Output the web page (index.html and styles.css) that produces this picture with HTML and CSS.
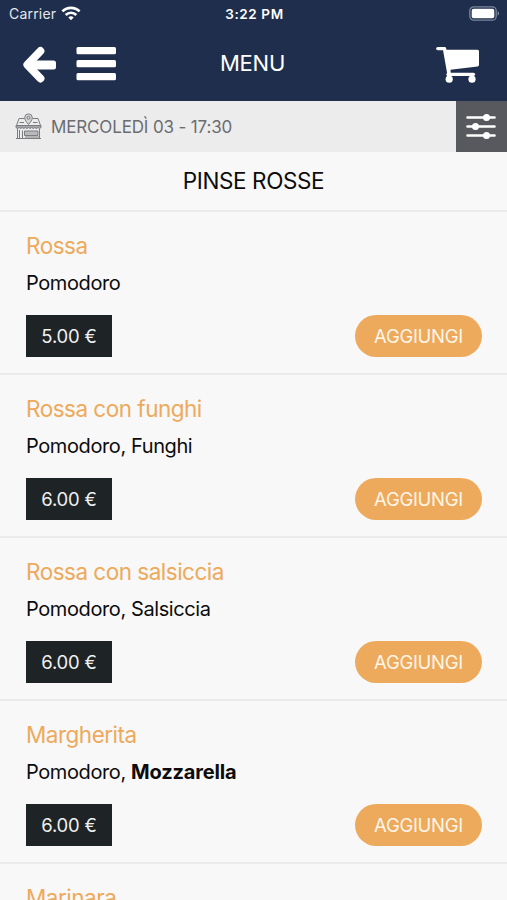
FILE: index.html
```html
<!DOCTYPE html>
<html lang="it">
<head>
    <meta charset="utf-8">
    <meta name="viewport" content="width=device-width, initial-scale=1">
    <title>Menu</title>
    <link rel="stylesheet" href="styles.css">
</head>
<body>
    <header>
        <div class="status-bar">
            <div class="carrier">
                <span>Carrier</span>
                <svg width="20" height="15" viewBox="0 0 20 15" fill="none" stroke="#fff" stroke-width="2.7">
                    <path d="M1.400 5.400C6.300 .6 13.700 .6 18.600 5.400"/>
                    <path d="M4.700 9C7.700 6 12.300 6 15.300 9"/>
                    <path d="M7.300 11.400C8.900 9.900 11.100 9.900 12.700 11.400L10 14.200Z" fill="#fff" stroke="none"/>
                </svg>
            </div>
            <span class="time">3:22 PM</span>
            <svg class="battery" width="31" height="15" viewBox="0 0 31 15">
                <rect x=".8" y=".8" width="26.400" height="13.400" rx="4" fill="none" stroke="#7d869a" stroke-width="1.300"/>
                <rect x="2.700" y="2.700" width="22.600" height="9.600" rx="2" fill="#fff"/>
                <path d="M28.600 5.300C30.600 6 30.600 9 28.600 9.700Z" fill="#7d869a"/>
            </svg>
        </div>
        <nav class="nav-bar">
            <div class="nav-left">
                <svg width="34" height="38" viewBox="0 0 34 38" fill="none" stroke="#fff">
                    <path d="M18.500 6L5.300 19.800L18.500 33.500" stroke-width="7.800" stroke-linejoin="round" stroke-linecap="round"/>
                    <rect x="7" y="15.500" width="27" height="9" rx="2.500" fill="#fff" stroke="none"/>
                </svg>
                <svg width="40" height="34" viewBox="0 0 40 34" fill="#fff">
                    <rect x=".5" width="39.500" height="7.300" rx="1.500"/>
                    <rect x=".5" y="13" width="39.500" height="7.300" rx="1.500"/>
                    <rect x=".5" y="26" width="39.500" height="7.300" rx="1.500"/>
                </svg>
            </div>
            <h1>MENU</h1>
            <svg class="cart" width="44" height="38" viewBox="0 0 44 38" fill="#fff">
                <path d="M1.800 3.600H8.500L12.800 28V33" fill="none" stroke="#fff" stroke-width="3.400" stroke-linecap="round" stroke-linejoin="round"/>
                <path d="M8.500 4.800H41.500Q43 4.800 43 6.300V19.800Q43 21.300 41.500 21.500L14.500 24.800V28H11.500Z"/>
                <path d="M12 29.300H37.500" stroke="#fff" stroke-width="3.200" stroke-linecap="round"/>
                <path d="M36 29V33" stroke="#fff" stroke-width="3"/>
                <circle cx="13.200" cy="34.200" r="3.600"/>
                <circle cx="36" cy="34.200" r="3.600"/>
            </svg>
        </nav>
    </header>

    <div class="info-bar">
        <div class="pickup">
            <svg width="27" height="27" viewBox="0 0 27 27" fill="none" stroke="#7b7c80" stroke-width="1">
                <path d="M9.500 5.500H4L1.500 12.500H25.500L23 5.500H17.500"/>
                <path d="M1 12.500V14.500Q2.600 16.500 4.100 14.500Q5.700 16.500 7.200 14.500Q8.800 16.500 10.300 14.500Q11.900 16.500 13.500 14.500Q15.100 16.500 16.700 14.500Q18.200 16.500 19.800 14.500Q21.300 16.500 22.900 14.500Q24.400 16.500 26 14.500V12.500Z" fill="#a5a6a9"/>
                <path d="M2.500 16V25.500H24.500V16M1 25.500H26M7.500 25V17.500M4.500 17V25M10 24H24M4.500 9.500H9M18 9.500H22.500"/>
                <path d="M9.500 18H23V22.500H9.500Z" fill="#b9babc"/>
                <path d="M13.500 11.500C11.500 9 9.700 7 9.700 4.700A3.800 3.800 0 0 1 17.300 4.700C17.300 7 15.500 9 13.500 11.500Z" fill="#d6d7d8"/>
                <circle cx="13.500" cy="4.800" r="1.500"/>
            </svg>
            <span>MERCOLEDÌ 03 - 17:30</span>
        </div>
        <button class="filter" aria-label="Filtri">
            <svg width="30" height="25" viewBox="0 0 30 25" fill="#fff">
                <path d="M1.500 3.500H28.500M1.500 12.500H28.500M1.500 21.500H28.500" stroke="#fff" stroke-width="2.600" stroke-linecap="round"/>
                <circle cx="20.500" cy="3.500" r="3.500"/>
                <circle cx="9.500" cy="12.500" r="3.500"/>
                <circle cx="20.500" cy="21.500" r="3.500"/>
            </svg>
        </button>
    </div>

    <main>
        <h2>PINSE ROSSE</h2>
        <div class="item">
            <h3>Rossa</h3>
            <p>Pomodoro</p>
            <div class="row">
                <span class="price">5.00 €</span>
                <button class="add">AGGIUNGI</button>
            </div>
        </div>
        <div class="item">
            <h3>Rossa con funghi</h3>
            <p>Pomodoro, Funghi</p>
            <div class="row">
                <span class="price">6.00 €</span>
                <button class="add">AGGIUNGI</button>
            </div>
        </div>
        <div class="item">
            <h3>Rossa con salsiccia</h3>
            <p>Pomodoro, Salsiccia</p>
            <div class="row">
                <span class="price">6.00 €</span>
                <button class="add">AGGIUNGI</button>
            </div>
        </div>
        <div class="item">
            <h3>Margherita</h3>
            <p>Pomodoro, <b>Mozzarella</b></p>
            <div class="row">
                <span class="price">6.00 €</span>
                <button class="add">AGGIUNGI</button>
            </div>
        </div>
        <div class="item">
            <h3>Marinara</h3>
        </div>
    </main>
</body>
</html>
```
FILE: styles.css
```css
* {
    box-sizing: border-box;
}

body {
    margin: 0;
    height: 100vh;
    overflow: hidden;
    background-color: #f8f8f8;
    color: #0c0c0c;
    font-family: Inter, "Liberation Sans", sans-serif;
}

h1, h2, h3, p {
    margin: 0;
    font-weight: 400;
}

svg {
    display: block;
}

button {
    border: none;
    padding: 0;
    font-family: inherit;
    cursor: pointer;
}

header {
    height: 101px;
    background-color: #1f2e4c;
    color: #fff;
}

.status-bar {
    display: grid;
    grid-template-columns: 1fr auto 1fr;
    align-items: center;
    height: 27px;
    padding: 0 7px 0 9px;
    font-size: 14px;
}

.carrier {
    display: flex;
    align-items: center;
    gap: 5px;
    color: #e4e7ec;
    letter-spacing: 0.2px;
}

.time {
    font-weight: 600;
    font-size: 13.5px;
    letter-spacing: 0.6px;
}

.battery {
    justify-self: end;
}

.nav-bar {
    display: grid;
    grid-template-columns: 1fr auto 1fr;
    align-items: center;
    height: 74px;
    padding: 0 27px 0 22px;
}

.nav-left {
    display: flex;
    align-items: center;
    gap: 20px;
}

.nav-bar h1 {
    padding: 0 0 2px 3px;
    font-size: 22px;
    letter-spacing: -0.2px;
}

.cart {
    justify-self: end;
}

.info-bar {
    display: flex;
    justify-content: space-between;
    height: 51px;
    background-color: #ececec;
}

.pickup {
    display: flex;
    align-items: center;
    gap: 9px;
    padding-left: 15px;
    color: #6b6c70;
    font-size: 17px;
    letter-spacing: -0.15px;
}

.filter {
    display: flex;
    align-items: center;
    justify-content: center;
    width: 51px;
    padding-right: 2px;
    background-color: #58595f;
}

h2 {
    height: 60px;
    border-bottom: 2px solid #ebebeb;
    font-size: 22.5px;
    letter-spacing: -0.4px;
    line-height: 58px;
    text-align: center;
}

.item {
    height: 163px;
    padding: 19px 25px 0 26px;
    border-bottom: 2px solid #ebebeb;
}

.item h3 {
    color: #edaa5c;
    font-size: 22.5px;
    letter-spacing: -0.5px;
    line-height: 30px;
}

.item p {
    margin-top: 7px;
    font-size: 20px;
    letter-spacing: -0.4px;
    line-height: 30px;
}

.item p b {
    letter-spacing: -0.15px;
}

.row {
    display: flex;
    justify-content: space-between;
    margin-top: 17px;
}

.price {
    width: 86px;
    height: 42px;
    background-color: #1e2326;
    color: #f0f0f0;
    font-size: 18.5px;
    letter-spacing: -0.2px;
    line-height: 43px;
    text-align: center;
}

.add {
    width: 127px;
    height: 42px;
    border-radius: 21px;
    background-color: #edaa5c;
    color: #fff6e8;
    font-size: 18.5px;
    letter-spacing: -0.3px;
}
```
